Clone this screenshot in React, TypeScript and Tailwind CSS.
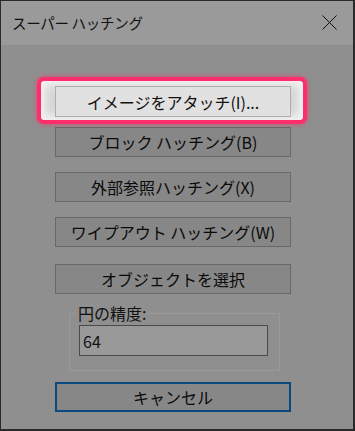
import React from "react";

const font = { fontFamily: '"Noto Sans CJK JP", "Noto Sans", sans-serif' };

function DimButton({ label, className = "" }: { label: string; className?: string }) {
  return (
    <div
      className={
        "flex h-[30px] w-[236px] items-center justify-center border border-[#686868] bg-[#878787] text-[16px] leading-none text-[#0a0a0a] " +
        className
      }
    >
      {label}
    </div>
  );
}

export default function App() {
  return (
    <div
      style={font}
      className="flex h-[431px] w-[355px] flex-col overflow-hidden border-b-2 border-l border-r-2 border-t border-[#2a2a2a] bg-[#8f8f8f] text-black"
    >
      <div className="flex h-[44px] shrink-0 items-center justify-between bg-[#9a9a9a] pl-[11px] pr-[16px]">
        <span className="text-[14.5px] leading-none tracking-[-0.3px] text-[#111]">スーパー ハッチング</span>
        <svg width="15" height="15" viewBox="0 0 15 15" className="mb-[1px]">
          <path d="M0.5 0.5 L14.5 14.5 M14.5 0.5 L0.5 14.5" stroke="#111" strokeWidth="1" fill="none" />
        </svg>
      </div>
      <div className="flex flex-col pl-[54px]">
        <div className="relative mt-[41px] w-[236px]">
          <div className="absolute -bottom-[7px] -left-[18px] -right-[16px] -top-[9px] rounded-[7px] border-[4px] border-[#ff2d6b] bg-[#d6d6d6] shadow-[0_0_4px_1px_rgba(255,45,107,0.5),inset_0_0_8px_4px_#f4f4f4]" />
          <div className="relative flex h-[31px] w-[236px] items-center justify-center border border-[#adadad] bg-[#e1e1e1] text-[16px] leading-none text-[#111]">
            イメージをアタッチ(I)...
          </div>
        </div>
        <DimButton label="ブロック ハッチング(B)" className="mt-[10px]" />
        <DimButton label="外部参照ハッチング(X)" className="mt-[15px]" />
        <DimButton label="ワイプアウト ハッチング(W)" className="mt-[15px]" />
        <DimButton label="オブジェクトを選択" className="mt-[17px]" />
        <div className="relative ml-[14px] mt-[19px] h-[58px] w-[211px] border border-[#9a9a9a]">
          <span className="absolute -top-[10px] left-[6px] bg-[#8f8f8f] px-[2px] text-[16px] leading-[18px] text-[#111]">
            円の精度:
          </span>
          <div className="ml-[9px] mt-[11px] flex h-[31px] w-[189px] items-center border border-[#4a4a4a] bg-[#999999] pl-[3px] text-[16px] leading-none text-[#111]">
            64
          </div>
        </div>
        <div className="mt-[11px] flex h-[30px] w-[236px] items-center justify-center border-2 border-[#08497f] bg-[#878787] text-[16px] leading-none text-[#0a0a0a]">
          キャンセル
        </div>
      </div>
    </div>
  );
}
